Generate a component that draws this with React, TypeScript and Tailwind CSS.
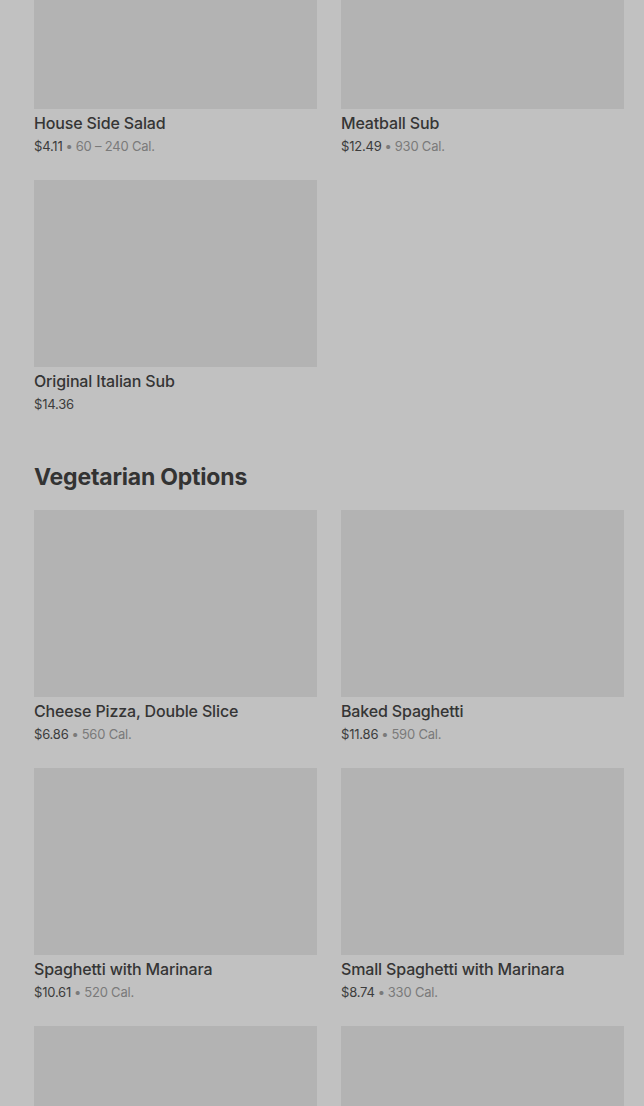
import React from "react";

type Item = { name: string; price: string; cal?: string };

const top: Item[] = [
  { name: "House Side Salad", price: "$4.11", cal: "60 – 240 Cal." },
  { name: "Meatball Sub", price: "$12.49", cal: "930 Cal." },
  { name: "Original Italian Sub", price: "$14.36" },
];

const veg: Item[] = [
  { name: "Cheese Pizza, Double Slice", price: "$6.86", cal: "560 Cal." },
  { name: "Baked Spaghetti", price: "$11.86", cal: "590 Cal." },
  { name: "Spaghetti with Marinara", price: "$10.61", cal: "520 Cal." },
  { name: "Small Spaghetti with Marinara", price: "$8.74", cal: "330 Cal." },
  { name: "", price: "" },
  { name: "", price: "" },
];

function Card({ item }: { item: Item }) {
  return (
    <div className="flex flex-col">
      <div className="h-[187px] w-full bg-[#b3b3b3]" />
      {item.name && (
        <>
          <div className="mt-[4px] text-[16px] leading-[20px] font-medium text-[#353535] tracking-[-0.15px]">
            {item.name}
          </div>
          <div className="mt-[3px] text-[13px] leading-[20px] text-[#3c3c3c] tracking-[-0.2px]">
            {item.price}
            {item.cal && (
              <span className="text-[#7a7a7a]">
                <span className="mx-[3px]">•</span>
                {item.cal}
              </span>
            )}
          </div>
        </>
      )}
    </div>
  );
}

export default function App() {
  return (
    <div
      className="min-h-[1106px] w-[644px] overflow-hidden bg-[#c1c1c1] pl-[34px] pr-[20px]"
      style={{ fontFamily: "Inter, 'Noto Sans', sans-serif" }}
    >
      <div className="mt-[-78px] grid grid-cols-2 gap-x-[24px] gap-y-[24px]">
        {top.map((it, i) => (
          <Card key={i} item={it} />
        ))}
      </div>
      <h2 className="mt-[47px] mb-[17px] text-[23px] leading-[32px] font-bold text-[#333333] tracking-[-0.2px]">
        Vegetarian Options
      </h2>
      <div className="grid grid-cols-2 gap-x-[24px] gap-y-[24px]">
        {veg.map((it, i) => (
          <Card key={i} item={it} />
        ))}
      </div>
    </div>
  );
}
